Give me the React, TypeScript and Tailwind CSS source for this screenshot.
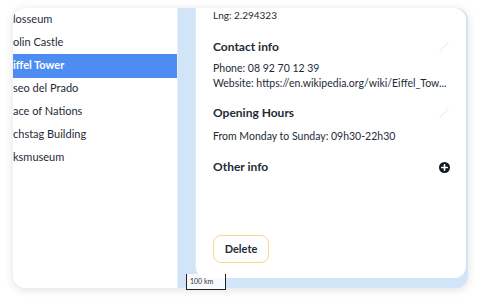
import React from 'react';

const places = [
  { name: 'losseum' },
  { name: 'olin Castle' },
  { name: 'iffel Tower', active: true },
  { name: 'seo del Prado' },
  { name: 'ace of Nations' },
  { name: 'chstag Building' },
  { name: 'ksmuseum' },
];

const FaintPencil: React.FC = () => (
  <svg className="w-[10px] h-[10px]" viewBox="0 0 10 10" fill="none">
    <path d="M1 9L9 1" stroke="#eef0f2" strokeWidth={1.5} strokeLinecap="round" />
  </svg>
);

const App: React.FC = () => {
  return (
    <div
      className="w-[480px] h-[300px] bg-white pt-[8px] pl-[13px]"
      style={{ fontFamily: 'Lato, "Noto Sans", sans-serif' }}
    >
      <div className="relative w-[455px] h-[280px] rounded-[12px] bg-[#d2e5f8] shadow-[0_2px_10px_rgba(0,0,0,0.12)] flex">
        {/* list */}
        <div className="w-[165px] h-full bg-white rounded-l-[12px] overflow-hidden border-r border-[#e6eef8]">
          <div className="pt-[0px]">
            {places.map((p, i) => (
              <div
                key={i}
                className={
                  p.active
                    ? 'h-[24px] flex items-center bg-[#4d8cf0] text-white font-bold text-[11px] my-[-0.5px]'
                    : 'h-[23px] flex items-center text-[#1e2b36] text-[11px]'
                }
              >
                {p.name}
              </div>
            ))}
          </div>
        </div>

        {/* map + detail */}
        <div className="flex-1 pl-[17px] pr-[2px] pb-[10px]">
          <div className="h-full bg-white rounded-[12px] rounded-tl-none border-l border-[#e2ebf5] flex flex-col pl-[17px] pr-[17px] text-[#1e2b36]">
            <div className="text-[10px] leading-[14px]">Lng: 2.294323</div>

            <div className="flex items-center justify-between mt-[17px]">
              <div className="text-[12px] font-bold leading-[16px]">Contact info</div>
              <FaintPencil />
            </div>
            <div className="text-[10.5px] leading-[15px] mt-[6px]">Phone: 08 92 70 12 39</div>
            <div className="text-[10.5px] leading-[15px] whitespace-nowrap">
              Website: https://en.wikipedia.org/wiki/Eiffel_Tow...
            </div>

            <div className="flex items-center justify-between mt-[14px]">
              <div className="text-[12px] font-bold leading-[16px]">Opening Hours</div>
              <FaintPencil />
            </div>
            <div className="text-[10.5px] leading-[15px] mt-[8px]">From Monday to Sunday: 09h30-22h30</div>

            <div className="flex items-center justify-between mt-[15px]">
              <div className="text-[12px] font-bold leading-[16px]">Other info</div>
              <svg className="w-[11px] h-[11px] mr-[-1px]" viewBox="0 0 12 12">
                <circle cx="6" cy="6" r="6" fill="#111a22" />
                <path d="M6 3v6M3 6h6" stroke="white" strokeWidth={1.8} strokeLinecap="round" />
              </svg>
            </div>

            <div className="mt-auto mb-[15px]">
              <button className="w-[56px] h-[28px] rounded-[8px] border border-[#f8d98a] text-[11px] font-bold text-[#1e2b36]">
                Delete
              </button>
            </div>
          </div>
        </div>

        {/* scale bar */}
        <div className="absolute left-[173px] top-[266px] w-[40px] h-[16px] bg-white/80 border-x border-b border-[#222] flex items-center pl-[3px] text-[7px] text-[#333]">
          100 km
        </div>
      </div>
    </div>
  );
};

export default App;
